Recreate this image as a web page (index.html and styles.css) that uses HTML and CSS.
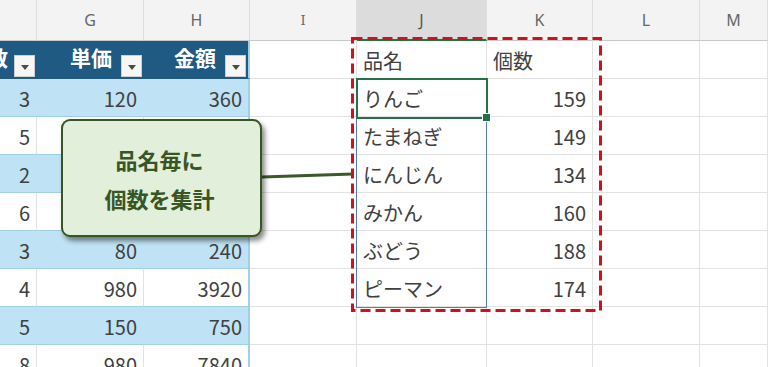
FILE: index.html
```html
<!DOCTYPE html>
<html lang="ja">
<head>
<meta charset="utf-8">
<link rel="stylesheet" href="styles.css">
</head>
<body>
<div class="sheet">
  <div class="grid">
    <!-- column headers -->
    <div class="ch"></div>
    <div class="ch">G</div>
    <div class="ch">H</div>
    <div class="ch ch-i">I</div>
    <div class="ch ch-sel">J</div>
    <div class="ch">K</div>
    <div class="ch">L</div>
    <div class="ch">M</div>

    <!-- row 1: table header -->
    <div class="c th first"><span class="tl">数</span><span class="fb"></span></div>
    <div class="c th"><span class="tl">単価</span><span class="fb"></span></div>
    <div class="c th last"><span class="tl">金額</span><span class="fb"></span></div>
    <div class="c"></div>
    <div class="c txt">品名</div>
    <div class="c txt">個数</div>
    <div class="c"></div>
    <div class="c"></div>

    <!-- row 2 -->
    <div class="c num band first">3</div>
    <div class="c num band">120</div>
    <div class="c num band last">360</div>
    <div class="c"></div>
    <div class="c txt">りんご</div>
    <div class="c num">159</div>
    <div class="c"></div>
    <div class="c"></div>

    <!-- row 3 (G/H hidden under callout) -->
    <div class="c num plain first">5</div>
    <div class="c num plain"></div>
    <div class="c num plain last"></div>
    <div class="c"></div>
    <div class="c txt">たまねぎ</div>
    <div class="c num">149</div>
    <div class="c"></div>
    <div class="c"></div>

    <!-- row 4 -->
    <div class="c num band first">2</div>
    <div class="c num band"></div>
    <div class="c num band last"></div>
    <div class="c"></div>
    <div class="c txt">にんじん</div>
    <div class="c num">134</div>
    <div class="c"></div>
    <div class="c"></div>

    <!-- row 5 -->
    <div class="c num plain first">6</div>
    <div class="c num plain"></div>
    <div class="c num plain last"></div>
    <div class="c"></div>
    <div class="c txt">みかん</div>
    <div class="c num">160</div>
    <div class="c"></div>
    <div class="c"></div>

    <!-- row 6 -->
    <div class="c num band first">3</div>
    <div class="c num band">80</div>
    <div class="c num band last">240</div>
    <div class="c"></div>
    <div class="c txt">ぶどう</div>
    <div class="c num">188</div>
    <div class="c"></div>
    <div class="c"></div>

    <!-- row 7 -->
    <div class="c num plain first">4</div>
    <div class="c num plain">980</div>
    <div class="c num plain last">3920</div>
    <div class="c"></div>
    <div class="c txt">ピーマン</div>
    <div class="c num">174</div>
    <div class="c"></div>
    <div class="c"></div>

    <!-- row 8 -->
    <div class="c num band first">5</div>
    <div class="c num band">150</div>
    <div class="c num band last">750</div>
    <div class="c"></div>
    <div class="c"></div>
    <div class="c"></div>
    <div class="c"></div>
    <div class="c"></div>

    <!-- row 9 -->
    <div class="c num plain first">8</div>
    <div class="c num plain">980</div>
    <div class="c num plain last">7840</div>
    <div class="c"></div>
    <div class="c"></div>
    <div class="c"></div>
    <div class="c"></div>
    <div class="c"></div>
  </div>

  <!-- overlays -->
  <div class="range-blue"></div>
  <div class="active-cell"><span class="handle"></span></div>

  <svg class="overlay" width="768" height="367" viewBox="0 0 768 367">
    <line x1="262" y1="177" x2="353" y2="174" stroke="#3b5a27" stroke-width="3"/>
    <rect x="352.5" y="38.5" width="248" height="272" fill="none" stroke="#d0101c" stroke-width="3" stroke-dasharray="10 5"/>
  </svg>

  <div class="callout">
    <div>品名毎に</div>
    <div>個数を集計</div>
  </div>
</div>
</body>
</html>
```

FILE: styles.css
```css
html, body {
  margin: 0;
  padding: 0;
  background: #ffffff;
  overflow: hidden;
}

body {
  width: 768px;
  height: 367px;
  font-family: "Noto Sans CJK JP", "Noto Sans", sans-serif;
}

.sheet {
  position: relative;
  width: 768px;
  height: 367px;
  overflow: hidden;
}

.grid {
  display: grid;
  grid-template-columns: 37px 107px 106px 107px 130px 106px 107px 68px;
  grid-template-rows: 41px repeat(9, 38px);
}

.ch {
  box-sizing: border-box;
  background: #f3f3f3;
  border-right: 1px solid #dedede;
  border-bottom: 1px solid #c9c9c9;
  color: #666666;
  font-family: "Noto Sans", "Open Sans", sans-serif;
  font-size: 16px;
  display: flex;
  align-items: center;
  justify-content: center;
}

.ch-i {
  font-family: "DejaVu Serif", serif;
  font-size: 13px;
}

.ch-sel {
  background: #dcdcdc;
  border-bottom: 2px solid #217346;
  color: #555;
}

.c {
  box-sizing: border-box;
  border-right: 1px solid #e2e2e2;
  border-bottom: 1px solid #e2e2e2;
  font-size: 20px;
  color: #404040;
  display: flex;
  align-items: center;
  white-space: nowrap;
  overflow: hidden;
}

.txt {
  padding-left: 6px;
  padding-top: 1px;
}

.num {
  justify-content: flex-end;
  padding-right: 6px;
  padding-top: 1px;
}

.th {
  background: #1f5a83;
  color: #ffffff;
  font-weight: bold;
  font-size: 21px;
  justify-content: flex-end;
  padding-right: 2px;
  gap: 9px;
  border-right: none;
  border-bottom: 1px solid #1f5a83;
}

.th.first {
  justify-content: flex-start;
  padding-left: 0;
  gap: 6px;
}

.th.first .tl {
  margin-left: -13px;
}

.tl {
  line-height: 1;
  padding-bottom: 4px;
}

.fb {
  width: 21px;
  height: 22px;
  box-sizing: border-box;
  background: #f6f6f6;
  border: 1px solid #cfcfcf;
  align-self: flex-end;
  margin-bottom: 1px;
  position: relative;
}

.fb::after {
  content: "";
  position: absolute;
  left: 6px;
  top: 9px;
  border-left: 4px solid transparent;
  border-right: 4px solid transparent;
  border-top: 5px solid #4a4a4a;
}

.band {
  background: #bfe2f4;
  border-bottom: 1px solid #9fcfe9;
  border-right: 1px solid #bfe2f4;
}

.plain {
  background: #ffffff;
  border-bottom: 1px solid #9fcfe9;
  border-right: 1px solid #e2e2e2;
}

.band.last, .plain.last, .th.last {
  border-right: 2px solid #9fcfe9;
}

.range-blue {
  position: absolute;
  left: 356px;
  top: 79px;
  width: 131px;
  height: 229px;
  box-sizing: border-box;
  border: 1.5px solid #5378c0;
}

.active-cell {
  position: absolute;
  left: 356px;
  top: 78px;
  width: 132px;
  height: 41px;
  box-sizing: border-box;
  border: 2px solid #217346;
}

.handle {
  position: absolute;
  right: -5px;
  bottom: -5px;
  width: 7px;
  height: 7px;
  background: #217346;
  border: 1px solid #ffffff;
}

.overlay {
  position: absolute;
  left: 0;
  top: 0;
}

.callout {
  position: absolute;
  left: 61px;
  top: 119px;
  width: 201px;
  height: 118px;
  box-sizing: border-box;
  background: #e2efda;
  border: 2.5px solid #375623;
  border-radius: 9px;
  box-shadow: 3px 4px 5px rgba(0, 0, 0, 0.45);
  display: flex;
  flex-direction: column;
  align-items: center;
  justify-content: center;
  gap: 5px;
  color: #375623;
  font-weight: bold;
  font-size: 22px;
  line-height: 34px;
  padding-right: 4px;
}
```
